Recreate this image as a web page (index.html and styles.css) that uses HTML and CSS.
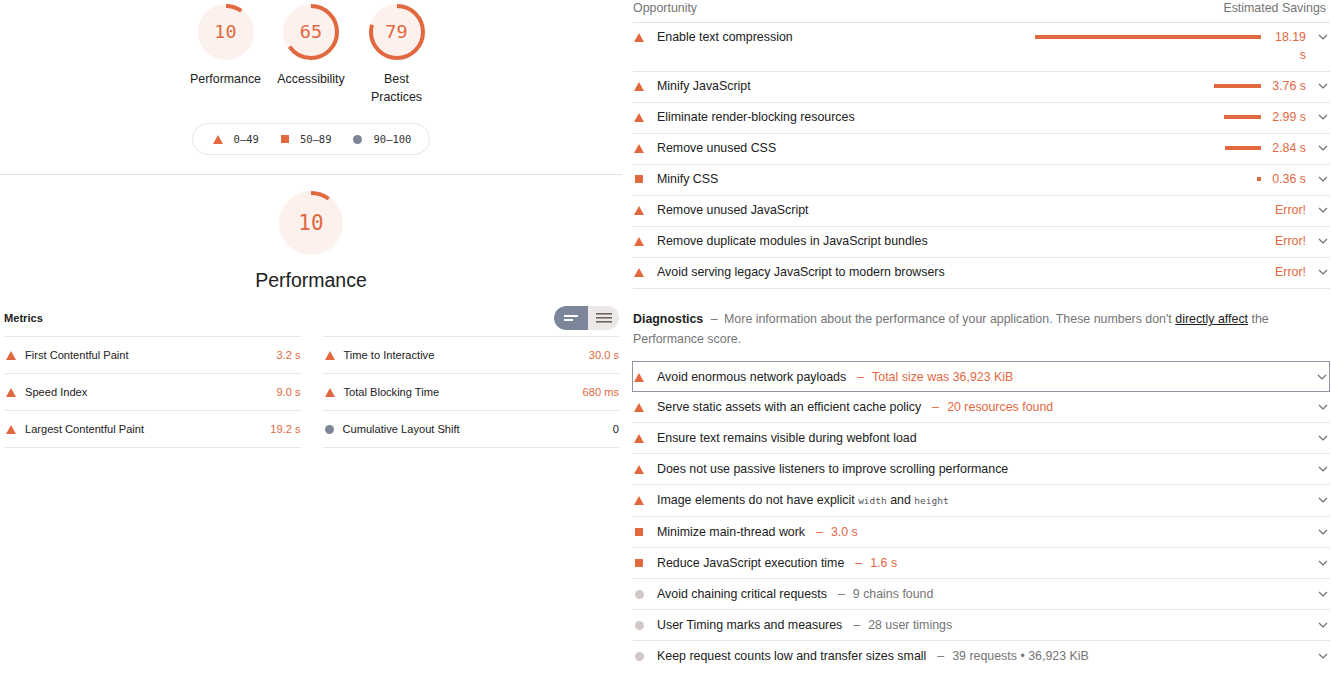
FILE: index.html
```html
<!DOCTYPE html>
<html>
<head>
<meta charset="utf-8">
<link rel="stylesheet" href="styles.css">
</head>
<body>
<div class="page">
  <section class="left">
    <div class="gauges">
      <div class="gauge">
        <div class="ring">
          <svg class="ring-svg" width="60" height="60" viewBox="0 0 60 60"><circle class="ring-bg" cx="30" cy="30" r="28"/><circle class="ring-arc" cx="30" cy="30" r="26" stroke-dasharray="16.3 200" transform="rotate(-90 30 30)"/></svg>
          <span class="ring-num">10</span>
        </div>
        <div class="gauge-label">Performance</div>
      </div>
      <div class="gauge">
        <div class="ring">
          <svg class="ring-svg" width="60" height="60" viewBox="0 0 60 60"><circle class="ring-bg" cx="30" cy="30" r="28"/><circle class="ring-arc" cx="30" cy="30" r="26" stroke-dasharray="106.2 200" transform="rotate(-90 30 30)"/></svg>
          <span class="ring-num">65</span>
        </div>
        <div class="gauge-label">Accessibility</div>
      </div>
      <div class="gauge">
        <div class="ring">
          <svg class="ring-svg" width="60" height="60" viewBox="0 0 60 60"><circle class="ring-bg" cx="30" cy="30" r="28"/><circle class="ring-arc" cx="30" cy="30" r="26" stroke-dasharray="129.1 200" transform="rotate(-90 30 30)"/></svg>
          <span class="ring-num">79</span>
        </div>
        <div class="gauge-label">Best Practices</div>
      </div>
    </div>

    <div class="legend-wrap">
      <div class="legend">
        <span class="legend-item"><span class="ico tri"></span>0–49</span>
        <span class="legend-item"><span class="ico sq"></span>50–89</span>
        <span class="legend-item"><span class="ico dot-slate"></span>90–100</span>
      </div>
    </div>

    <div class="divider"></div>

    <div class="big-gauge">
      <div class="ring big">
        <svg class="ring-svg" width="68" height="68" viewBox="0 0 68 68"><circle class="ring-bg" cx="34" cy="34" r="32"/><circle class="ring-arc" cx="34" cy="34" r="30" stroke-dasharray="18.85 250" transform="rotate(-90 34 34)"/></svg>
        <span class="ring-num big-num">10</span>
      </div>
      <div class="big-label">Performance</div>
    </div>

    <div class="metrics">
      <div class="metrics-head">
        <span class="metrics-title">Metrics</span>
        <div class="toggle">
          <span class="toggle-on">
            <svg width="18" height="10" viewBox="0 0 18 10"><rect x="2" y="2" width="14" height="2" fill="#fff"/><rect x="2" y="6" width="9" height="2" fill="#fff"/></svg>
          </span>
          <span class="toggle-off">
            <svg width="18" height="12" viewBox="0 0 18 12"><rect x="1" y="1" width="16" height="1.6" fill="#6f6663"/><rect x="1" y="5" width="16" height="1.6" fill="#6f6663"/><rect x="1" y="9" width="16" height="1.6" fill="#6f6663"/></svg>
          </span>
        </div>
      </div>
      <div class="metrics-grid">
        <div class="metric"><span class="ico tri"></span><span class="m-name">First Contentful Paint</span><span class="m-val fail">3.2 s</span></div>
        <div class="metric"><span class="ico tri"></span><span class="m-name">Time to Interactive</span><span class="m-val fail">30.0 s</span></div>
        <div class="metric"><span class="ico tri"></span><span class="m-name">Speed Index</span><span class="m-val fail">9.0 s</span></div>
        <div class="metric"><span class="ico tri"></span><span class="m-name">Total Blocking Time</span><span class="m-val fail">680 ms</span></div>
        <div class="metric"><span class="ico tri"></span><span class="m-name">Largest Contentful Paint</span><span class="m-val fail">19.2 s</span></div>
        <div class="metric"><span class="ico dot-slate"></span><span class="m-name">Cumulative Layout Shift</span><span class="m-val">0</span></div>
      </div>
    </div>
  </section>

  <section class="right">
    <div class="opp-head">
      <span>Opportunity</span>
      <span>Estimated Savings</span>
    </div>
    <div class="opp-list">
      <div class="row">
        <span class="icon-box"><span class="ico tri"></span></span>
        <span class="title">Enable text compression</span>
        <span class="bar-wrap"><span class="bar" style="width:226px"></span></span>
        <span class="value">18.19 s</span>
        <span class="chev"><svg width="12" height="8" viewBox="0 0 12 8"><path d="M2 2 L6 6 L10 2" fill="none" stroke="#6f6f6f" stroke-width="1.2"/></svg></span>
      </div>
      <div class="row">
        <span class="icon-box"><span class="ico tri"></span></span>
        <span class="title">Minify JavaScript</span>
        <span class="bar-wrap"><span class="bar" style="width:47px"></span></span>
        <span class="value">3.76 s</span>
        <span class="chev"><svg width="12" height="8" viewBox="0 0 12 8"><path d="M2 2 L6 6 L10 2" fill="none" stroke="#6f6f6f" stroke-width="1.2"/></svg></span>
      </div>
      <div class="row">
        <span class="icon-box"><span class="ico tri"></span></span>
        <span class="title">Eliminate render-blocking resources</span>
        <span class="bar-wrap"><span class="bar" style="width:37px"></span></span>
        <span class="value">2.99 s</span>
        <span class="chev"><svg width="12" height="8" viewBox="0 0 12 8"><path d="M2 2 L6 6 L10 2" fill="none" stroke="#6f6f6f" stroke-width="1.2"/></svg></span>
      </div>
      <div class="row">
        <span class="icon-box"><span class="ico tri"></span></span>
        <span class="title">Remove unused CSS</span>
        <span class="bar-wrap"><span class="bar" style="width:36px"></span></span>
        <span class="value">2.84 s</span>
        <span class="chev"><svg width="12" height="8" viewBox="0 0 12 8"><path d="M2 2 L6 6 L10 2" fill="none" stroke="#6f6f6f" stroke-width="1.2"/></svg></span>
      </div>
      <div class="row">
        <span class="icon-box"><span class="ico sq"></span></span>
        <span class="title">Minify CSS</span>
        <span class="bar-wrap"><span class="bar" style="width:4px"></span></span>
        <span class="value">0.36 s</span>
        <span class="chev"><svg width="12" height="8" viewBox="0 0 12 8"><path d="M2 2 L6 6 L10 2" fill="none" stroke="#6f6f6f" stroke-width="1.2"/></svg></span>
      </div>
      <div class="row">
        <span class="icon-box"><span class="ico tri"></span></span>
        <span class="title">Remove unused JavaScript</span>
        <span class="value err">Error!</span>
        <span class="chev"><svg width="12" height="8" viewBox="0 0 12 8"><path d="M2 2 L6 6 L10 2" fill="none" stroke="#6f6f6f" stroke-width="1.2"/></svg></span>
      </div>
      <div class="row">
        <span class="icon-box"><span class="ico tri"></span></span>
        <span class="title">Remove duplicate modules in JavaScript bundles</span>
        <span class="value err">Error!</span>
        <span class="chev"><svg width="12" height="8" viewBox="0 0 12 8"><path d="M2 2 L6 6 L10 2" fill="none" stroke="#6f6f6f" stroke-width="1.2"/></svg></span>
      </div>
      <div class="row">
        <span class="icon-box"><span class="ico tri"></span></span>
        <span class="title">Avoid serving legacy JavaScript to modern browsers</span>
        <span class="value err">Error!</span>
        <span class="chev"><svg width="12" height="8" viewBox="0 0 12 8"><path d="M2 2 L6 6 L10 2" fill="none" stroke="#6f6f6f" stroke-width="1.2"/></svg></span>
      </div>
    </div>

    <p class="diag-head"><b class="diag-title">Diagnostics</b> <span class="diag-sep">–</span> <span>More information about the performance of your application. These numbers don't</span> <a class="diag-link">directly affect</a> <span>the</span> <span>Performance score.</span></p>

    <div class="diag-list">
      <div class="row focused">
        <span class="icon-box"><span class="ico tri"></span></span>
        <span class="title">Avoid enormous network payloads<span class="sep fail">–</span><span class="fail">Total size was 36,923 KiB</span></span>
        <span class="chev"><svg width="12" height="8" viewBox="0 0 12 8"><path d="M2 2 L6 6 L10 2" fill="none" stroke="#6f6f6f" stroke-width="1.2"/></svg></span>
      </div>
      <div class="row">
        <span class="icon-box"><span class="ico tri"></span></span>
        <span class="title">Serve static assets with an efficient cache policy<span class="sep fail">–</span><span class="fail">20 resources found</span></span>
        <span class="chev"><svg width="12" height="8" viewBox="0 0 12 8"><path d="M2 2 L6 6 L10 2" fill="none" stroke="#6f6f6f" stroke-width="1.2"/></svg></span>
      </div>
      <div class="row">
        <span class="icon-box"><span class="ico tri"></span></span>
        <span class="title">Ensure text remains visible during webfont load</span>
        <span class="chev"><svg width="12" height="8" viewBox="0 0 12 8"><path d="M2 2 L6 6 L10 2" fill="none" stroke="#6f6f6f" stroke-width="1.2"/></svg></span>
      </div>
      <div class="row">
        <span class="icon-box"><span class="ico tri"></span></span>
        <span class="title">Does not use passive listeners to improve scrolling performance</span>
        <span class="chev"><svg width="12" height="8" viewBox="0 0 12 8"><path d="M2 2 L6 6 L10 2" fill="none" stroke="#6f6f6f" stroke-width="1.2"/></svg></span>
      </div>
      <div class="row">
        <span class="icon-box"><span class="ico tri"></span></span>
        <span class="title">Image elements do not have explicit <code>width</code> and <code>height</code></span>
        <span class="chev"><svg width="12" height="8" viewBox="0 0 12 8"><path d="M2 2 L6 6 L10 2" fill="none" stroke="#6f6f6f" stroke-width="1.2"/></svg></span>
      </div>
      <div class="row">
        <span class="icon-box"><span class="ico sq"></span></span>
        <span class="title">Minimize main-thread work<span class="sep fail">–</span><span class="fail">3.0 s</span></span>
        <span class="chev"><svg width="12" height="8" viewBox="0 0 12 8"><path d="M2 2 L6 6 L10 2" fill="none" stroke="#6f6f6f" stroke-width="1.2"/></svg></span>
      </div>
      <div class="row">
        <span class="icon-box"><span class="ico sq"></span></span>
        <span class="title">Reduce JavaScript execution time<span class="sep fail">–</span><span class="fail">1.6 s</span></span>
        <span class="chev"><svg width="12" height="8" viewBox="0 0 12 8"><path d="M2 2 L6 6 L10 2" fill="none" stroke="#6f6f6f" stroke-width="1.2"/></svg></span>
      </div>
      <div class="row">
        <span class="icon-box"><span class="ico dot-info"></span></span>
        <span class="title">Avoid chaining critical requests<span class="sep info">–</span><span class="info">9 chains found</span></span>
        <span class="chev"><svg width="12" height="8" viewBox="0 0 12 8"><path d="M2 2 L6 6 L10 2" fill="none" stroke="#6f6f6f" stroke-width="1.2"/></svg></span>
      </div>
      <div class="row">
        <span class="icon-box"><span class="ico dot-info"></span></span>
        <span class="title">User Timing marks and measures<span class="sep info">–</span><span class="info">28 user timings</span></span>
        <span class="chev"><svg width="12" height="8" viewBox="0 0 12 8"><path d="M2 2 L6 6 L10 2" fill="none" stroke="#6f6f6f" stroke-width="1.2"/></svg></span>
      </div>
      <div class="row">
        <span class="icon-box"><span class="ico dot-info"></span></span>
        <span class="title">Keep request counts low and transfer sizes small<span class="sep info">–</span><span class="info">39 requests • 36,923 KiB</span></span>
        <span class="chev"><svg width="12" height="8" viewBox="0 0 12 8"><path d="M2 2 L6 6 L10 2" fill="none" stroke="#6f6f6f" stroke-width="1.2"/></svg></span>
      </div>
    </div>
  </section>
</div>
</body>
</html>
```

FILE: styles.css
```css
* { box-sizing: border-box; }

html, body {
  margin: 0;
  padding: 0;
  background: #ffffff;
}

body {
  font-family: "Liberation Sans", Arial, Helvetica, sans-serif;
  color: #212121;
  font-size: 12.4px;
}

.page {
  display: flex;
  align-items: flex-start;
}

/* ---------- left ---------- */
.left {
  width: 622px;
  flex: none;
}

.gauges {
  display: flex;
  justify-content: center;
  gap: 11.5px;
  padding-top: 2px;
}

.gauge {
  width: 74px;
  display: flex;
  flex-direction: column;
  align-items: center;
}

.ring {
  display: grid;
  place-items: center;
  width: 60px;
  height: 60px;
}

.ring > * {
  grid-area: 1 / 1;
}

.ring.big {
  width: 68px;
  height: 68px;
}

.ring-bg {
  fill: #fcf1ed;
}

.ring-arc {
  fill: none;
  stroke: #e2693f;
  stroke-width: 4;
}

.ring-num {
  font-family: "DejaVu Sans Mono", "Liberation Mono", monospace;
  font-size: 18.5px;
  color: #e2693f;
  line-height: 1;
}

.big-num {
  font-size: 21px;
}

.gauge-label {
  margin-top: 8px;
  font-size: 12.4px;
  line-height: 18px;
  text-align: center;
  color: #212121;
}

.legend-wrap {
  display: flex;
  justify-content: center;
  margin-top: 17px;
}

.legend {
  display: flex;
  align-items: center;
  height: 32px;
  padding: 0 18px 0 20px;
  border: 1px solid #ece4e1;
  border-radius: 16px;
  font-family: "DejaVu Sans Mono", "Liberation Mono", monospace;
  font-size: 10.5px;
  color: #333;
  gap: 22px;
}

.legend-item {
  display: flex;
  align-items: center;
  gap: 11px;
}

.ico {
  display: inline-block;
  flex: none;
}

.ico.tri {
  width: 0;
  height: 0;
  border-left: 5px solid transparent;
  border-right: 5px solid transparent;
  border-bottom: 9px solid #e2693f;
}

.ico.sq {
  width: 8px;
  height: 8px;
  background: #e2693f;
}

.ico.dot-slate {
  width: 9px;
  height: 9px;
  border-radius: 50%;
  background: #7d8698;
}

.ico.dot-info {
  width: 9px;
  height: 9px;
  border-radius: 50%;
  background: #d2c8c6;
}

.divider {
  margin-top: 19px;
  height: 1px;
  background: #e3e3e3;
}

.big-gauge {
  display: flex;
  flex-direction: column;
  align-items: center;
  margin-top: 14px;
}

.big-label {
  margin-top: 11px;
  font-size: 19.5px;
  line-height: 24px;
  color: #212121;
}

.metrics {
  margin-top: 14px;
  padding: 0 3px 0 4px;
}

.metrics-head {
  display: flex;
  justify-content: space-between;
  align-items: center;
  height: 24px;
  margin-bottom: 6px;
}

.metrics-title {
  font-weight: bold;
  font-size: 11.1px;
}

.toggle {
  display: flex;
  width: 65px;
  height: 24px;
  border-radius: 12px;
  overflow: hidden;
  background: #ebe8e7;
}

.toggle-on {
  width: 34px;
  background: #7c869a;
  display: flex;
  align-items: center;
  justify-content: center;
  border-radius: 12px 0 0 12px;
}

.toggle-off {
  flex: 1;
  display: flex;
  align-items: center;
  justify-content: center;
}

.metrics-grid {
  display: grid;
  grid-template-columns: 1fr 1fr;
  column-gap: 22px;
}

.metric {
  display: flex;
  align-items: center;
  height: 37px;
  border-top: 1px solid #e6e6e6;
  padding-left: 2px;
  font-size: 11.1px;
}

.metric:nth-last-child(-n+2) {
  height: 38px;
  border-bottom: 1px solid #e6e6e6;
}

.metric .ico {
  margin-right: 9px;
}

.m-name {
  flex: 1;
}

.m-val {
  color: #212121;
}

.m-val.fail {
  color: #e2693f;
}

/* ---------- right ---------- */
.right {
  width: 697px;
  flex: none;
  margin-left: 11px;
}

.opp-head {
  display: flex;
  justify-content: space-between;
  line-height: 16px;
  padding: 0 4px 6px 0;
  color: #757575;
  border-bottom: 1px solid #e3e3e3;
}

.row {
  display: flex;
  align-items: flex-start;
  padding: 6px 1px 6px 1px;
  line-height: 18px;
  border-bottom: 1px solid #e6e6e6;
}

.opp-list .row {
  padding-top: 5px;
  padding-bottom: 7px;
}

.icon-box {
  width: 10px;
  height: 18px;
  display: flex;
  align-items: center;
  justify-content: center;
  margin-right: 13px;
  flex: none;
}

.title {
  flex: 1;
  color: #212121;
}

.bar-wrap {
  height: 18px;
  display: flex;
  align-items: center;
  justify-content: flex-end;
  margin-right: 9px;
}

.bar {
  display: block;
  height: 4px;
  background: #e2693f;
}

.value {
  width: 36px;
  text-align: right;
  color: #e2693f;
  flex: none;
}

.value.err {
  width: auto;
}

.chev {
  width: 12px;
  height: 18px;
  display: flex;
  align-items: center;
  justify-content: center;
  margin-left: 11px;
  flex: none;
}

.diag-head {
  margin: 20px 0 12px 0;
  line-height: 20px;
  color: #757575;
}

.diag-title {
  font-weight: bold;
  color: #212121;
}

.diag-sep {
  margin: 0 3px 0 4px;
}

.diag-link {
  color: #212121;
  text-decoration: underline;
}

.diag-list .row.focused {
  border: 1px solid #8e94a2;
  margin-left: -1px;
  padding-top: 6px;
  padding-bottom: 5px;
}

.diag-list .row:last-child {
  border-bottom: none;
}

.sep {
  margin: 0 8px 0 11px;
}

.fail {
  color: #e2693f;
}

.info {
  color: #757575;
}

code {
  font-family: "DejaVu Sans Mono", "Liberation Mono", monospace;
  font-size: 9.5px;
  color: #555;
}
```
